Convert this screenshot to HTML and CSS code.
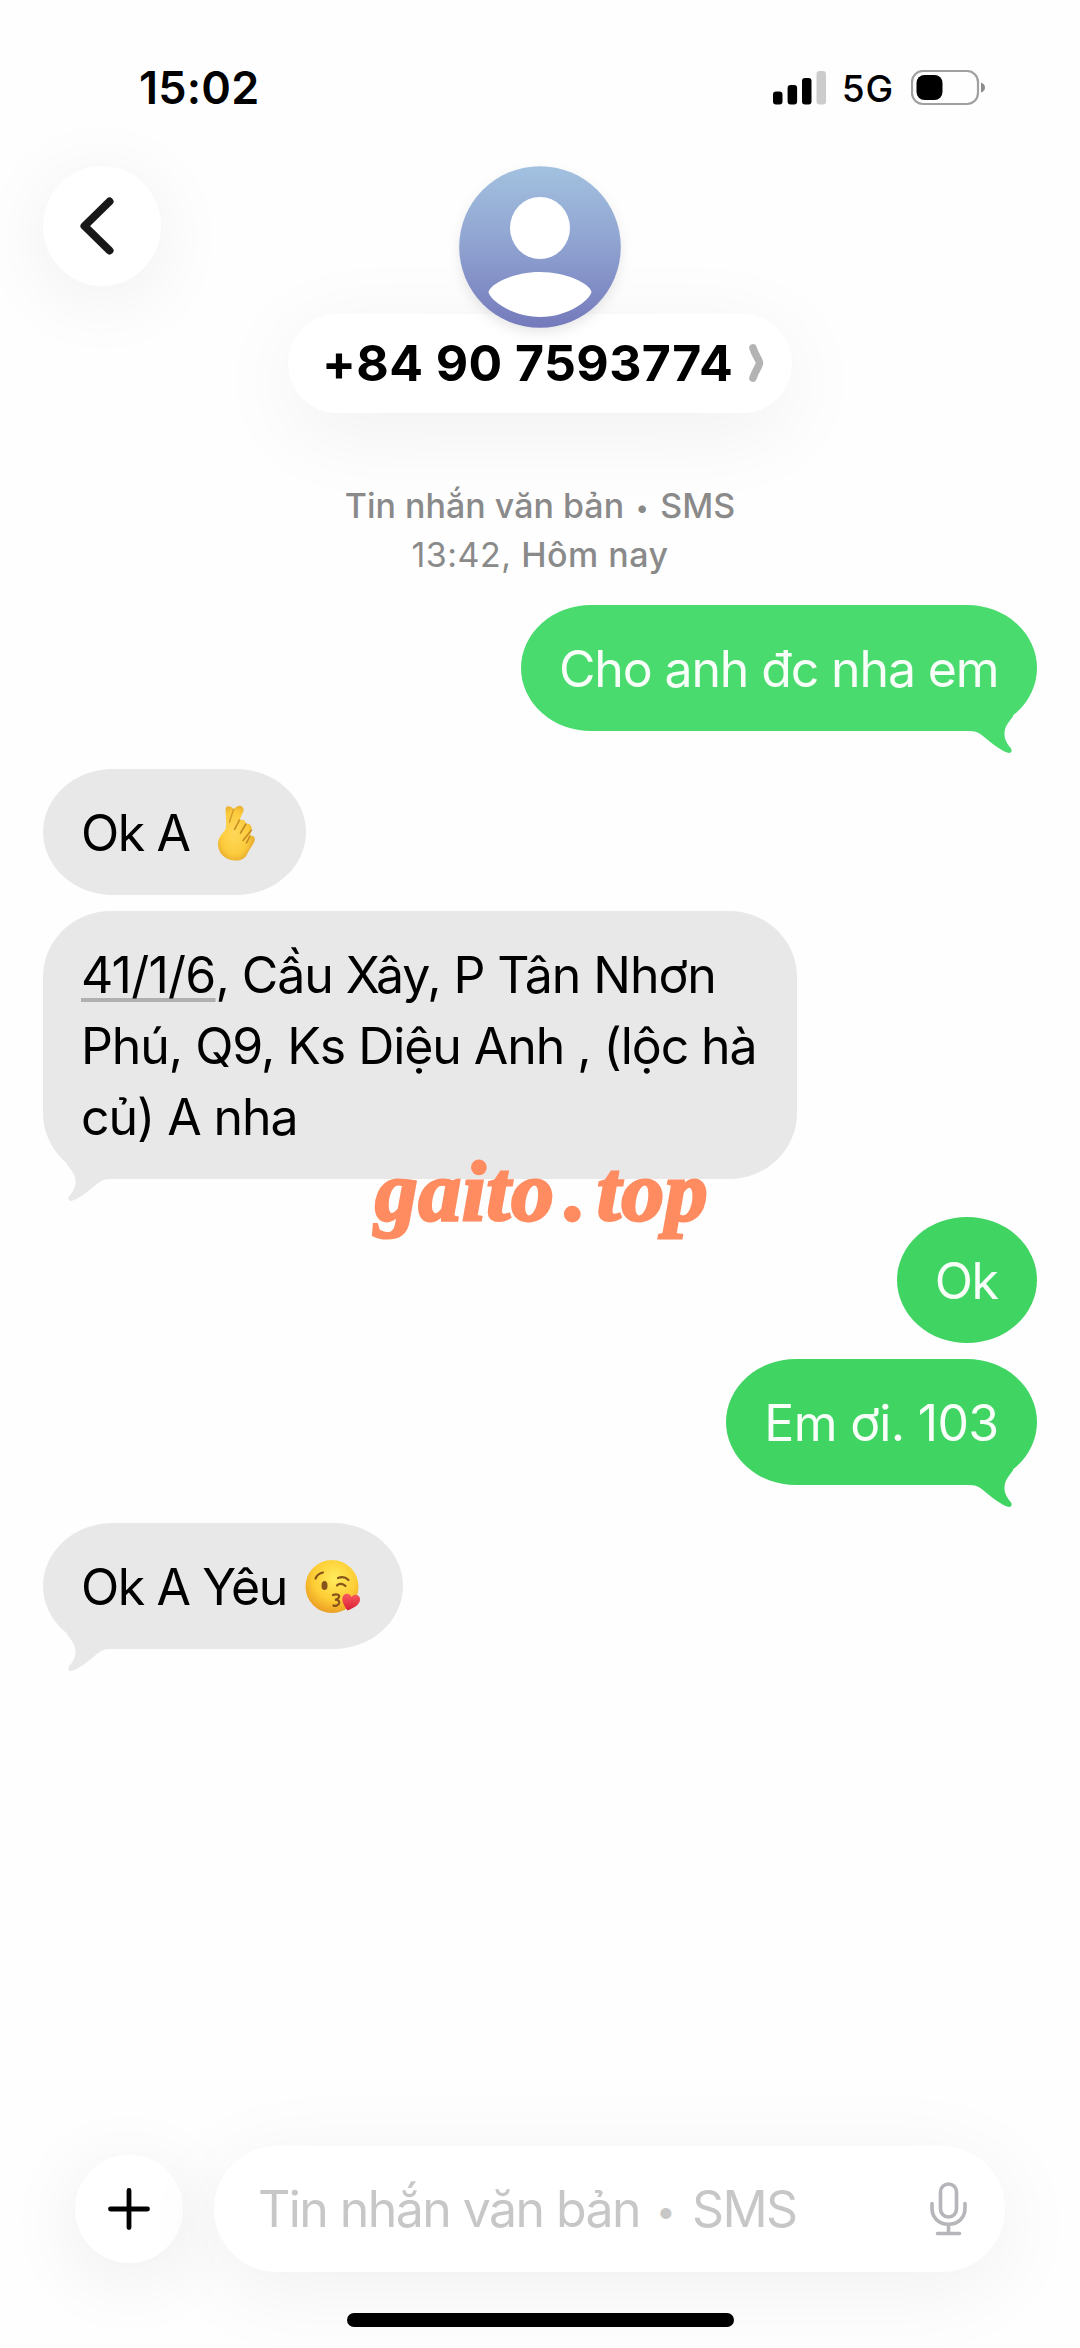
FILE: index.html
```html
<!DOCTYPE html>
<html lang="vi">
<head>
<meta charset="utf-8">
<title>+84 90 7593774</title>
<link rel="stylesheet" href="styles.css">
</head>
<body>
<svg class="defs" width="0" height="0" aria-hidden="true">
  <symbol id="tail" viewBox="0 0 48 46">
    <path d="M0 22H3C10 22 14 25 19 29.500C26 35.500 35 42 41 43.800C44.500 44.500 45.500 42 44 39.500C40.500 35 37.500 31 37.500 25C37.500 18 41 14 46 7.500V0H0Z"/>
  </symbol>
</svg>
<div class="screen">
  <div class="status">
    <span class="time">15:02</span>
    <div class="indicators">
      <svg class="signal" width="53" height="34" viewBox="0 0 53 34">
        <rect x="0" y="20.500" width="9.500" height="13" rx="3"/>
        <rect x="14.600" y="14" width="9.500" height="19.500" rx="3"/>
        <rect x="29" y="7" width="9.500" height="26.500" rx="3"/>
        <rect x="43.500" y="0" width="9.500" height="33.500" rx="3" fill="#ccc"/>
      </svg>
      <span class="network">5G</span>
      <svg class="battery" width="76" height="36" viewBox="0 0 76 36">
        <rect x="1" y="1" width="66" height="33" rx="11" fill="none" stroke="#a0a0a0" stroke-width="2.200"/>
        <rect x="5.500" y="5" width="26" height="25" rx="8"/>
        <path d="M70 12.500Q74 14 74 17.500T70 22.500Z" fill="#8c8c8c"/>
      </svg>
    </div>
  </div>

  <header class="header">
    <button class="round back" aria-label="Back">
      <svg width="36" height="62" viewBox="0 0 36 62"><path d="M30.500 6.500L5.500 31L30.500 55.500" fill="none" stroke="#181818" stroke-width="8" stroke-linecap="round" stroke-linejoin="round"/></svg>
    </button>
    <div class="contact">
      <svg class="avatar" width="162" height="162" viewBox="0 0 162 162">
        <defs><linearGradient id="sky" x1="0" y1="0" x2="0" y2="1"><stop offset="0" stop-color="#a2c1df"/><stop offset=".45" stop-color="#91a5d2"/><stop offset="1" stop-color="#747abb"/></linearGradient></defs>
        <circle cx="81" cy="81" r="80.800" fill="url(#sky)"/>
        <ellipse cx="81" cy="62" rx="30" ry="31" fill="#fff"/>
        <path d="M29.500 126C31 118 54 106 81 106S131 118 132.500 126C131 134 109 151 81 151S31 134 29.500 126Z" fill="#fff"/>
      </svg>
      <div class="pill">
        <span class="number">+84 90 7593774</span>
        <svg width="18" height="40" viewBox="0 0 18 40"><path d="M5 5C7 12 11.500 17 11.500 20S7 28 5 35" fill="none" stroke="#b3b3b3" stroke-width="7.600" stroke-linecap="round" stroke-linejoin="round"/></svg>
      </div>
    </div>
  </header>

  <div class="day">
    <div class="channel">Tin nhắn văn bản <span class="dot">•</span> SMS</div>
    <div class="stamp"><span class="clock">13:42,</span> Hôm nay</div>
  </div>

  <main class="thread">
    <div class="bubble sent early">Cho anh đc nha em<svg class="tail"><use href="#tail"/></svg></div>
    <div class="bubble received turn tight">Ok A
      <svg class="emoji" width="62" height="62" viewBox="0 0 62 62">
        <defs><radialGradient id="skin" cx=".45" cy=".5" r=".6"><stop offset="0" stop-color="#ffd85a"/><stop offset=".65" stop-color="#fccb3c"/><stop offset="1" stop-color="#dfa02a"/></radialGradient></defs>
        <path d="M20 5.500C21.500 3.500 25 4 27.500 7L31 4.500C34 2.500 38.500 5 37.500 9L33.500 18C37 17 40 18.500 40 22C44 21 46 24 45.500 28L44 34C47.500 33 49.500 35.500 48.500 39C46.500 44 43.500 47 41.500 51.500C39 57 34 59 28.500 58.500C18 58 11.500 50 12 41C12.500 35 16 32 19.500 27.500C21.500 19 18.500 9 20 5.500Z" fill="url(#skin)"/>
        <path d="M33.500 18L28.500 27.500M40 22L34.500 31M45.500 28L37 38.500M44 34L40.500 41" fill="none" stroke="#c48a22" stroke-width="1.600" stroke-linecap="round"/>
        <path d="M27.500 7.500L23.500 20" fill="none" stroke="#d29a2d" stroke-width="1.400" stroke-linecap="round"/>
      </svg>
    </div>
    <div class="bubble received long"><span class="link">41/1/6</span>, Cầu Xây, P Tân Nhơn<br>Phú, Q9, Ks Diệu Anh , (lộc hà<br>củ) A nha<svg class="tail"><use href="#tail"/></svg>
      <span class="watermark"><span>gaito</span><span>.</span><span>top</span></span>
    </div>
    <div class="bubble sent turn ok">Ok</div>
    <div class="bubble sent room">Em ơi. 103<svg class="tail"><use href="#tail"/></svg></div>
    <div class="bubble received turn tight">Ok A Yêu
      <svg class="emoji" width="62" height="62" viewBox="0 0 62 62">
        <defs>
          <radialGradient id="face" cx=".55" cy=".35" r=".68"><stop offset="0" stop-color="#ffec5c"/><stop offset=".6" stop-color="#fdcd35"/><stop offset="1" stop-color="#e99a22"/></radialGradient>
          <linearGradient id="heart" x1="0" y1="0" x2="0" y2="1"><stop offset="0" stop-color="#fa5a60"/><stop offset="1" stop-color="#d91f35"/></linearGradient>
        </defs>
        <circle cx="29" cy="30.500" r="26.500" fill="url(#face)"/>
        <g fill="none" stroke="#86531b" stroke-width="2.200" stroke-linecap="round">
          <path d="M12.500 22.500C14 19 17 17 20 16.500M35 22C39 20.500 43 21.500 45.500 24M34 29.500C36 27 40 27.500 42.500 30"/>
          <path d="M30 39C34 37.500 37 39 36 41C35.500 42.500 33.500 43.500 32 43.800C35 43.500 37 45 36 47.500C35 49.500 32 50.500 30.500 49.500"/>
        </g>
        <ellipse cx="21.500" cy="29.500" rx="3" ry="4.600" fill="#86531b"/>
        <path d="M44.500 54.500C40.500 49 37.500 43 40.500 39.500C43 36.500 47 37.500 48.500 41C51.500 37.500 56 38.500 57 42.500C58 48 51 52 44.500 54.500Z" fill="url(#heart)"/>
      </svg>
      <svg class="tail"><use href="#tail"/></svg>
    </div>
  </main>

  <footer class="composer">
    <button class="round plus" aria-label="Add">
      <svg width="42" height="42" viewBox="0 0 42 42"><path d="M21 2.500V39.500M2.500 21H39.500" fill="none" stroke="#000" stroke-width="4.800" stroke-linecap="round"/></svg>
    </button>
    <div class="field">
      <span class="placeholder">Tin nhắn văn bản <span class="dot">•</span> SMS</span>
      <svg width="38" height="54" viewBox="0 0 38 54" fill="none" stroke="#b5b5ba" stroke-width="3.600" stroke-linecap="round"><rect x="11.500" y="2" width="16" height="33" rx="8"/><path d="M3 21.500V26C3 36 10 42.300 19.500 42.300S36 36 36 26V21.500M19.500 43V50M8.500 51.500H30.500" /></svg>
    </div>
  </footer>
  <div class="home"></div>
</div>
</body>
</html>
```
FILE: styles.css
```css
* { box-sizing: border-box; }

body {
  margin: 0;
  background: #fefefe;
  color: #000;
  font-family: Inter, "Noto Sans", sans-serif;
}

.defs { display: block; height: 0; }

.screen {
  display: flex;
  flex-direction: column;
  width: 1080px;
  height: 2348px;
  overflow: hidden;
}

.status {
  display: flex;
  justify-content: space-between;
  align-items: center;
  height: 166px;
  padding: 10px 93px 0 139px;
}

.time {
  font-size: 45px;
  font-weight: 600;
  line-height: 56px;
  letter-spacing: .2px;
}

.indicators { display: flex; align-items: center; }

.network {
  margin: 2px 17px 0 16px;
  font-size: 37px;
  font-weight: 450;
  line-height: 44px;
  letter-spacing: .8px;
}

.header {
  display: grid;
  grid-template-columns: 245px 504px;
  align-items: start;
  padding-left: 43px;
}

.round {
  display: flex;
  align-items: center;
  justify-content: center;
  padding: 0;
  border: 0;
  border-radius: 50%;
  background: #fff;
}

.back {
  width: 118px;
  height: 120px;
  padding-right: 10px;
  box-shadow: 0 12px 80px rgba(0, 0, 0, .065);
}

.contact {
  display: flex;
  flex-direction: column;
  align-items: center;
}

.avatar {
  position: relative;
  z-index: 1;
  filter: drop-shadow(0 5px 6px rgba(0, 0, 0, .09));
}

.pill {
  display: flex;
  align-items: center;
  justify-content: space-between;
  width: 504px;
  height: 99px;
  margin-top: -14px;
  padding: 0 26px 1px 34px;
  border-radius: 50px;
  background: #fff;
  box-shadow: 0 18px 90px rgba(0, 0, 0, .06);
}

.number {
  font-size: 50px;
  font-weight: 700;
  line-height: 60px;
  letter-spacing: .4px;
  white-space: nowrap;
}

.day {
  margin: 69px 0 26px;
  color: #8a8a8a;
  font-size: 34px;
  font-weight: 500;
  line-height: 48.5px;
  text-align: center;
}

.stamp { letter-spacing: .5px; }
.clock { font-weight: 400; }

.dot {
  display: inline-block;
  width: 18px;
  font-size: 24px;
  line-height: 20px;
  letter-spacing: 0;
  text-align: center;
  vertical-align: 2px;
}

.thread {
  display: flex;
  flex-direction: column;
  align-items: flex-start;
  gap: 16px;
  padding: 0 43.500px 0 43px;
}

.bubble {
  position: relative;
  padding: 29px 38px 26px;
  border-radius: 70px / 63px;
  font-size: 50px;
  line-height: 71px;
  letter-spacing: -1.07px;
  white-space: nowrap;
}

.received { background: #e8e8e8; fill: #e8e8e8; }

.sent {
  align-self: flex-end;
  background: #40d463;
  color: #f7fff8;
  fill: #40d463;
}

.early {
  background: #4adb6f;
  fill: #4adb6f;
  letter-spacing: -1.13px;
}

.turn { margin-top: 22px; }
.ok { padding-right: 39px; letter-spacing: -1.5px; }
.room { letter-spacing: -.69px; }

.tight {
  display: flex;
  align-items: center;
  gap: 16px;
  letter-spacing: -1.4px;
}

.emoji { margin-top: -2px; }

.long {
  width: 754px;
  border-radius: 68px / 66px;
}

.link {
  letter-spacing: -.75px;
  text-decoration: underline #b0b0b0 4px;
  text-underline-offset: 5px;
}

.tail {
  position: absolute;
  right: 22px;
  bottom: -24px;
  width: 48px;
  height: 46px;
}

.received .tail {
  right: auto;
  left: 22px;
  transform: scaleX(-1);
}

.watermark {
  position: absolute;
  top: 232px;
  left: 332px;
  z-index: 2;
  display: flex;
  gap: 10px;
  color: #ff8c60;
  font: italic 700 85px/96px "Liberation Serif", serif;
  letter-spacing: 1px;
  -webkit-text-stroke: 3px #ff8c60;
}

.composer {
  display: flex;
  align-items: center;
  gap: 31px;
  margin-top: auto;
  padding-left: 75px;
}

.plus {
  width: 108px;
  height: 108px;
  box-shadow: 0 14px 80px rgba(0, 0, 0, .075);
}

.field {
  display: flex;
  align-items: center;
  justify-content: space-between;
  width: 791px;
  height: 126px;
  padding: 0 38px 0 44px;
  border-radius: 63px;
  background: #fff;
  box-shadow: 0 16px 90px rgba(0, 0, 0, .06);
}

.placeholder {
  color: #c7c7c7;
  font-size: 50px;
  line-height: 60px;
  letter-spacing: -1.57px;
  white-space: nowrap;
}

.placeholder .dot {
  width: 27px;
  font-size: 35px;
  vertical-align: 3px;
}

.home {
  position: relative;
  width: 387px;
  height: 14px;
  margin: 41px auto 21px;
  border-radius: 7px;
  background: #000;
}
```
